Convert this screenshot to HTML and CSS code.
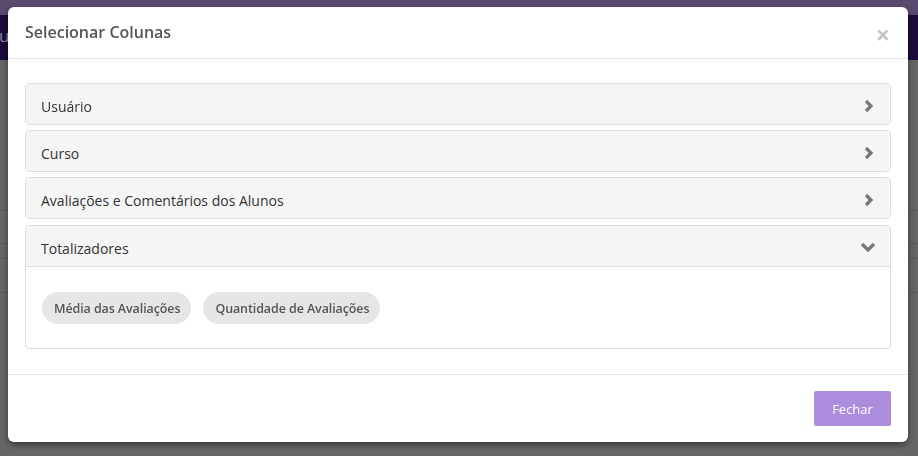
FILE: index.html
```html
<!DOCTYPE html>
<html lang="pt">
<head>
<meta charset="utf-8">
<title>Selecionar Colunas</title>
<link rel="stylesheet" href="styles.css">
</head>
<body>
<div class="page">
  <div class="topbar"></div>
  <div class="navbar"><span class="nav-letter">u</span></div>
  <div class="rows">
    <div class="row r1"></div>
    <div class="row r2"></div>
    <div class="row r3"></div>
    <div class="row r4"></div>
  </div>
</div>

<div class="modal">
  <div class="modal-header">
    <h4 class="modal-title">Selecionar Colunas</h4>
    <span class="close">&times;</span>
  </div>
  <div class="modal-body">
    <div class="panel">
      <div class="panel-heading">
        <span>Usuário</span>
        <svg class="chev" width="12" height="14" viewBox="0 0 12 14"><polyline points="3,2 8,7 3,12" fill="none" stroke="#777" stroke-width="3.2"/></svg>
      </div>
    </div>
    <div class="panel">
      <div class="panel-heading">
        <span>Curso</span>
        <svg class="chev" width="12" height="14" viewBox="0 0 12 14"><polyline points="3,2 8,7 3,12" fill="none" stroke="#777" stroke-width="3.2"/></svg>
      </div>
    </div>
    <div class="panel">
      <div class="panel-heading">
        <span>Avaliações e Comentários dos Alunos</span>
        <svg class="chev" width="12" height="14" viewBox="0 0 12 14"><polyline points="3,2 8,7 3,12" fill="none" stroke="#777" stroke-width="3.2"/></svg>
      </div>
    </div>
    <div class="panel open">
      <div class="panel-heading">
        <span>Totalizadores</span>
        <svg class="chev down" width="16" height="12" viewBox="0 0 16 12"><polyline points="2,3 8,9 14,3" fill="none" stroke="#777" stroke-width="3.2"/></svg>
      </div>
      <div class="panel-content">
        <span class="pill">Média das Avaliações</span>
        <span class="pill">Quantidade de Avaliações</span>
      </div>
    </div>
  </div>
  <div class="modal-footer">
    <button class="btn">Fechar</button>
  </div>
</div>
</body>
</html>
```

FILE: styles.css
```css
* { box-sizing: border-box; }
html, body {
  margin: 0;
  padding: 0;
  width: 918px;
  height: 456px;
  overflow: hidden;
  background: #666666;
  font-family: "Open Sans", "Noto Sans", sans-serif;
}
.page { width: 918px; height: 456px; }
.topbar { height: 15px; background: #5a4a6f; }
.navbar {
  height: 45px;
  background: #1d0b3c;
  display: flex;
  align-items: center;
}
.nav-letter {
  color: #8a8a9a;
  font-size: 17px;
  margin-left: -1px;
  margin-top: -4px;
}
.rows { padding-top: 150px; }
.row { border-top: 1px solid #5b5b5b; }
.r1 { height: 33px; }
.r2 { height: 15px; }
.r3 { height: 34px; }
.r4 { height: 10px; }

.modal {
  position: fixed;
  left: 8px;
  top: 7px;
  width: 900px;
  height: 435px;
  background: #ffffff;
  border-radius: 6px;
  box-shadow: 0 3px 6px rgba(0,0,0,0.45);
  display: flex;
  flex-direction: column;
}
.modal-header {
  height: 52px;
  border-bottom: 1px solid #e5e5e5;
  display: flex;
  align-items: center;
  justify-content: space-between;
  padding: 0 17px 0 17px;
}
.modal-title {
  margin: 0;
  font-size: 16px;
  font-weight: 600;
  color: #555555;
  margin-top: -2px;
}
.close {
  color: #c4c4c4;
  font-size: 25px;
  font-weight: 700;
  line-height: 1;
  margin-top: 3px;
  margin-right: 1px;
}
.modal-body {
  padding: 24px 17px 25px 17px;
  display: flex;
  flex-direction: column;
  gap: 5px;
}
.panel {
  border: 1px solid #dddddd;
  border-radius: 4px;
  background: #ffffff;
}
.panel-heading {
  height: 40px;
  background: #f5f5f5;
  border-radius: 3px;
  display: flex;
  align-items: center;
  justify-content: space-between;
  padding: 0 15px 0 15px;
  font-size: 14px;
  color: #333333;
}
.panel-heading span { margin-top: 4px; }
.chev { margin-top: 3px; }
.open { margin-top: 1px; }
.open .panel-heading {
  border-bottom: 1px solid #dddddd;
  border-radius: 3px 3px 0 0;
  height: 41px;
}
.chev.down { margin-right: -1px; margin-top: 2px; }
.panel-content {
  height: 81px;
  padding: 25px 16px 0 16px;
  display: flex;
  gap: 12px;
  align-items: flex-start;
}
.pill {
  display: inline-flex;
  align-items: center;
  height: 32px;
  padding: 0 11px 0 12px;
  border-radius: 16px;
  background: #e6e6e6;
  color: #555555;
  font-size: 12.5px;
  font-weight: 600;
  letter-spacing: -0.1px;
}
.modal-footer {
  border-top: 1px solid #e5e5e5;
  padding: 16px 17px 0 17px;
  display: flex;
  justify-content: flex-end;
}
.btn {
  width: 77px;
  height: 35px;
  border: none;
  border-radius: 2px;
  background: #ac8ddd;
  color: #ffffff;
  font-family: "Open Sans", "Noto Sans", sans-serif;
  font-size: 13px;
  padding: 0;
}
```
